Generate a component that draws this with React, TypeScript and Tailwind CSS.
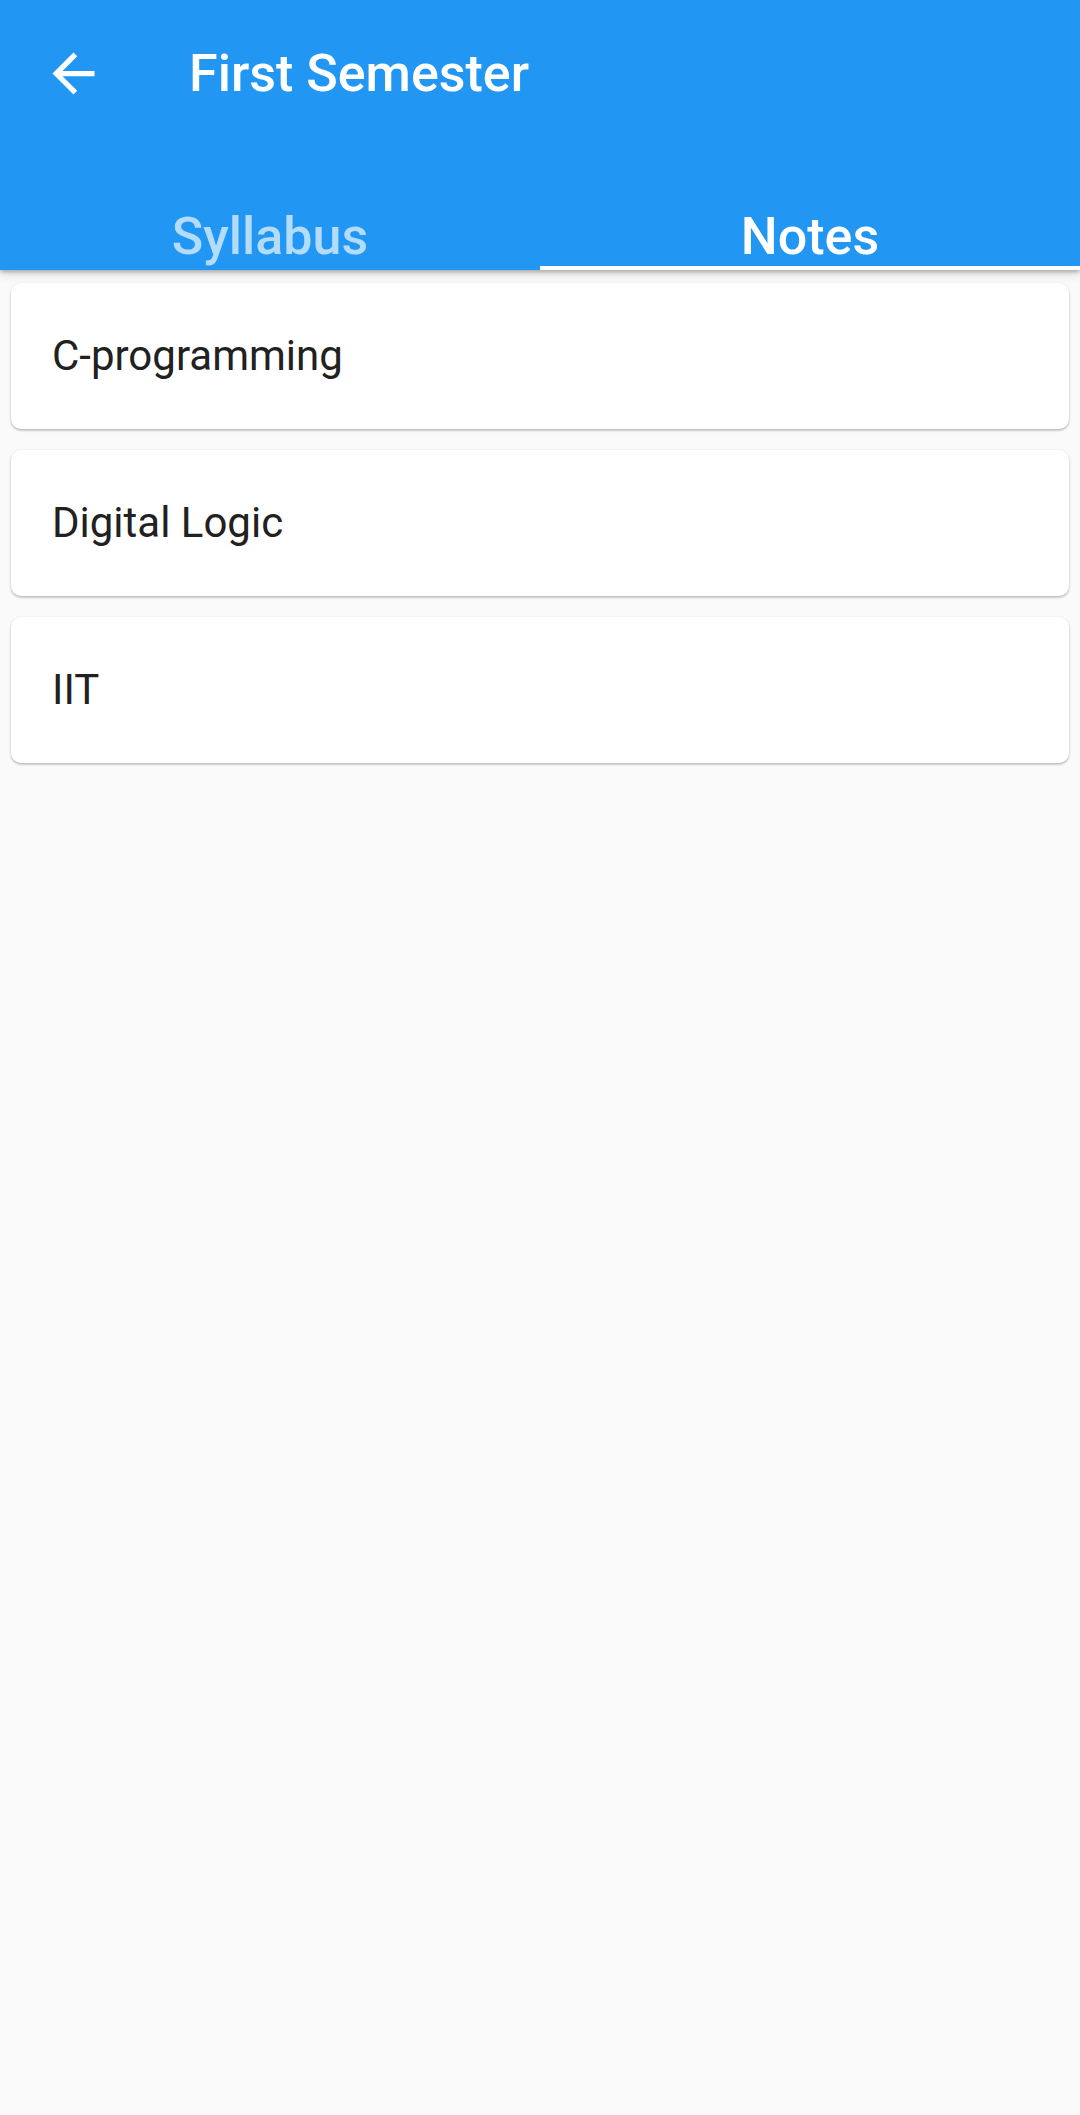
const subjects = ["C-programming", "Digital Logic", "IIT"];

function BackArrow() {
  return (
    <svg viewBox="0 0 24 24" className="w-[63px] h-[63px] fill-white">
      <path d="M20 11H7.83l5.59-5.59L12 4l-8 8 8 8 1.41-1.41L7.83 13H20v-2z" />
    </svg>
  );
}

export default function App() {
  const active = 1;
  const tabs = ["Syllabus", "Notes"];

  return (
    <div className="min-h-[2115px] bg-[#fafafa] font-['Roboto',sans-serif]">
      <header className="relative z-10 bg-[#2196f3] shadow-[0_2px_4px_rgba(0,0,0,0.25),0_4px_10px_rgba(0,0,0,0.12)]">
        <div className="h-[147px] flex items-center pl-[42px]">
          <BackArrow />
          <h1 className="ml-[84px] text-[52px] leading-none font-medium text-white">
            First Semester
          </h1>
        </div>
        <nav className="h-[123px] flex">
          {tabs.map((t, i) => (
            <div key={t} className="flex-1 flex flex-col justify-end items-center">
              <span
                className={`text-[52px] leading-[52px] font-medium ${
                  i === active ? "text-white" : "text-[#b3dcfb]"
                }`}
              >
                {t}
              </span>
              <div
                className={`mt-[3px] h-[4px] w-full ${
                  i === active ? "bg-white" : "bg-transparent"
                }`}
              />
            </div>
          ))}
        </nav>
      </header>

      <main className="px-[11px] pt-[13px] flex flex-col gap-[21px]">
        {subjects.map((s) => (
          <div
            key={s}
            className="h-[146px] rounded-[10px] bg-white shadow-[0_1px_3px_rgba(0,0,0,0.2),0_2px_2px_rgba(0,0,0,0.1)] flex items-center px-[41px] pb-[2px]"
          >
            <span className="text-[42px] text-[#212121]">{s}</span>
          </div>
        ))}
      </main>
    </div>
  );
}
